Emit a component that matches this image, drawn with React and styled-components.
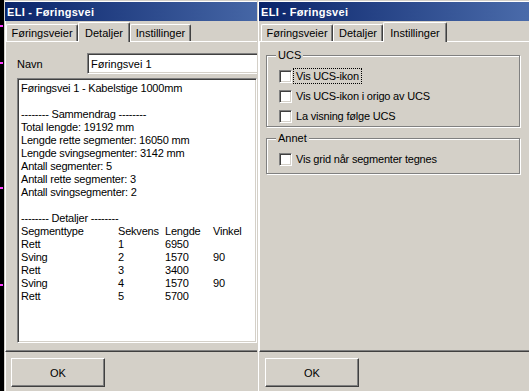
import React from 'react';
import styled, { createGlobalStyle } from 'styled-components';

const GlobalStyle = createGlobalStyle`
  html, body {
    margin: 0;
    padding: 0;
    background: #000;
  }
  body {
    font-family: "Liberation Sans", Arial, sans-serif;
    font-size: 11px;
    color: #000;
  }
`;

const Screen = styled.div`
  display: flex;
  width: 529px;
  height: 391px;
  overflow: hidden;
  background: #000;
`;

const Desktop = styled.div`
  position: relative;
  flex: none;
  width: 4px;
  background: #000;
`;

const Mark = styled.span`
  position: absolute;
  left: 0;
  top: ${(p) => p.$top}px;
  width: 3px;
  height: 2px;
  background: #ff3cff;
`;

const Window = styled.div`
  box-sizing: border-box;
  flex: none;
  width: ${(p) => p.$width}px;
  display: flex;
  flex-direction: column;
  overflow: hidden;
  background: #d4d0c8;
  border-top: 1px solid #d4d0c8;
  border-left: 1px solid #d4d0c8;
  padding-top: 1px;
  padding-left: ${(p) => p.$pad}px;
  box-shadow: inset 1px 1px 0 #fff;
`;

const TitleBar = styled.div`
  display: flex;
  align-items: center;
  height: 19px;
  padding-left: 2px;
  color: #fff;
  font-weight: bold;
  font-size: 11px;
  letter-spacing: 0.3px;
  white-space: nowrap;
  background: linear-gradient(90deg, #0a246a 0px, #4a6baa 270px, #a6caf0 540px);
`;

const TabStrip = styled.div`
  display: flex;
  align-items: flex-end;
  height: 20px;
  padding-left: ${(p) => p.$indent}px;
`;

const Tab = styled.div`
  box-sizing: border-box;
  position: relative;
  flex: none;
  display: flex;
  align-items: center;
  justify-content: center;
  width: ${(p) => p.$w}px;
  height: ${(p) => (p.$active ? 20 : 17)}px;
  margin-bottom: ${(p) => (p.$active ? -1 : 0)}px;
  z-index: ${(p) => (p.$active ? 1 : 0)};
  background: #d4d0c8;
  border-top: 1px solid #fff;
  border-left: 1px solid #fff;
  border-right: 1px solid #404040;
  border-radius: 2px 2px 0 0;
  box-shadow: inset -1px 0 0 #808080;
  white-space: nowrap;
`;

const Panel = styled.div`
  box-sizing: border-box;
  flex: none;
  width: 300px;
  height: 311px;
  border-top: 1px solid #fff;
  border-left: 1px solid #fff;
  border-right: 1px solid #404040;
  border-bottom: 1px solid #404040;
  box-shadow: inset -1px -1px 0 #808080;
  display: flex;
  flex-direction: column;
  gap: ${(p) => p.$gap}px;
  padding: ${(p) => p.$pad};
`;

const sunken = `
  box-sizing: border-box;
  background: #fff;
  border: 1px solid;
  border-color: #808080 #fff #fff #808080;
  box-shadow: inset 1px 1px 0 #404040, inset -1px -1px 0 #d4d0c8;
`;

const FieldRow = styled.div`
  display: flex;
  align-items: center;
  height: 21px;
`;

const FieldLabel = styled.div`
  flex: none;
  width: 70px;
`;

const TextBox = styled.div`
  ${sunken}
  flex: none;
  width: 200px;
  height: 21px;
  display: flex;
  align-items: center;
  padding-left: 3px;
  white-space: nowrap;
`;

const Memo = styled.div`
  ${sunken}
  width: 240px;
  height: 265px;
  padding: 3px 0 0 3px;
  overflow: hidden;
  letter-spacing: -0.2px;
`;

const Line = styled.div`
  height: 13px;
  line-height: 13px;
  white-space: nowrap;
`;

const TableRow = styled.div`
  display: grid;
  grid-template-columns: 97px 47px 48px auto;
  height: 13px;
  line-height: 13px;
  white-space: nowrap;
`;

const Group = styled.div`
  box-sizing: border-box;
  position: relative;
  width: 254px;
  border: 1px solid #808080;
  box-shadow: 1px 1px 0 #fff, inset 1px 1px 0 #fff;
  padding: 10px 0 ${(p) => p.$pb}px 12px;
`;

const GroupLabel = styled.span`
  position: absolute;
  top: -7px;
  left: 9px;
  padding: 0 2px;
  line-height: 13px;
  background: #d4d0c8;
`;

const CheckRow = styled.div`
  display: flex;
  align-items: center;
  height: 20px;
`;

const CheckBox = styled.span`
  ${sunken}
  flex: none;
  width: 13px;
  height: 13px;
`;

const CheckText = styled.span`
  margin-left: 1px;
  padding: 0 2px;
  line-height: 14px;
  letter-spacing: -0.2px;
  border: 1px dotted ${(p) => (p.$focus ? '#000' : 'transparent')};
  white-space: nowrap;
`;

const Footer = styled.div`
  padding: 6px 0 0 6px;
`;

const Button = styled.button`
  box-sizing: border-box;
  width: 94px;
  height: 29px;
  padding: 0;
  font: inherit;
  color: #000;
  background: #d4d0c8;
  border: 1px solid;
  border-color: #fff #404040 #404040 #fff;
  box-shadow: inset -1px -1px 0 #808080;
`;

const segments = [
  ['Rett', '1', '6950', ''],
  ['Sving', '2', '1570', '90'],
  ['Rett', '3', '3400', ''],
  ['Sving', '4', '1570', '90'],
  ['Rett', '5', '5700', ''],
];

const summary = [
  'Føringsvei 1 - Kabelstige 1000mm',
  '',
  '-------- Sammendrag --------',
  'Total lengde: 19192 mm',
  'Lengde rette segmenter: 16050 mm',
  'Lengde svingsegmenter: 3142 mm',
  'Antall segmenter: 5',
  'Antall rette segmenter: 3',
  'Antall svingsegmenter: 2',
  '',
  '-------- Detaljer --------',
];

const Tabs = ({ active, widths, indent }) => {
  const names = ['Føringsveier', 'Detaljer', 'Instillinger'];
  return (
    <TabStrip $indent={indent}>
      {names.map((n, i) => (
        <Tab key={n} $w={widths[i]} $active={i === active}>
          {n}
        </Tab>
      ))}
    </TabStrip>
  );
};

const Check = ({ label, focus }) => (
  <CheckRow>
    <CheckBox />
    <CheckText $focus={focus}>{label}</CheckText>
  </CheckRow>
);

export default function App() {
  return (
    <>
      <GlobalStyle />
      <Screen>
        <Desktop>
          <Mark $top={25} />
          <Mark $top={62} />
          <Mark $top={187} />
          <Mark $top={284} />
        </Desktop>

        <Window $width={253} $pad={0}>
          <TitleBar>ELI - Føringsvei</TitleBar>
          <Tabs active={1} widths={[72, 52, 61]} indent={1} />
          <Panel $gap={4} $pad="11px 0 0 11px">
            <FieldRow>
              <FieldLabel>Navn</FieldLabel>
              <TextBox>Føringsvei 1</TextBox>
            </FieldRow>
            <Memo>
              {summary.map((l, i) => (
                <Line key={i}>{l}</Line>
              ))}
              <TableRow>
                <span>Segmenttype</span>
                <span>Sekvens</span>
                <span>Lengde</span>
                <span>Vinkel</span>
              </TableRow>
              {segments.map((s, i) => (
                <TableRow key={i}>
                  {s.map((c, j) => (
                    <span key={j}>{c}</span>
                  ))}
                </TableRow>
              ))}
            </Memo>
          </Panel>
          <Footer>
            <Button>OK</Button>
          </Footer>
        </Window>

        <Window $width={272} $pad={1}>
          <TitleBar>ELI - Føringsvei</TitleBar>
          <Tabs active={2} widths={[72, 50, 64]} indent={2} />
          <Panel $gap={11} $pad="13px 0 0 6px">
            <Group $pb={0}>
              <GroupLabel>UCS</GroupLabel>
              <Check label="Vis UCS-ikon" focus />
              <Check label="Vis UCS-ikon i origo av UCS" />
              <Check label="La visning følge UCS" />
            </Group>
            <Group $pb={4}>
              <GroupLabel>Annet</GroupLabel>
              <Check label="Vis grid når segmenter tegnes" />
            </Group>
          </Panel>
          <Footer>
            <Button>OK</Button>
          </Footer>
        </Window>
      </Screen>
    </>
  );
}
